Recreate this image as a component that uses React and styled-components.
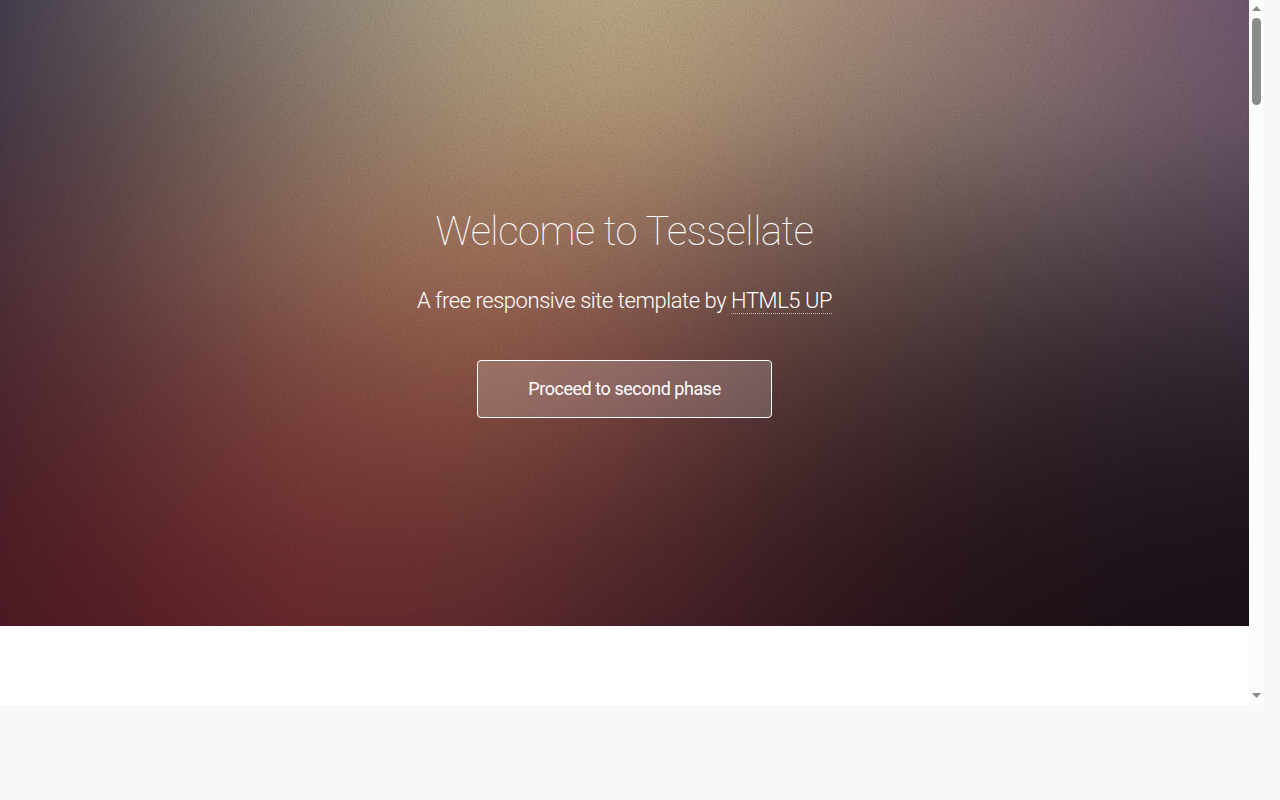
import React from "react";
import styled, { createGlobalStyle } from "styled-components";

const GlobalStyle = createGlobalStyle`
  body {
    margin: 0;
    background: #f8f8f8;
    color: #fff;
    font-family: Roboto, "Open Sans", sans-serif;
    font-size: 18px;
    letter-spacing: -0.025em;
  }
`;

const Preview = styled.div`
  display: flex;
  margin-right: 16px;
`;
const Page = styled.main`
  flex: 1;
  padding-bottom: 79px;
  background: #fff;
`;
const Hero = styled.section`
  position: relative;
  isolation: isolate;
  display: flex;
  flex-direction: column;
  align-items: center;
  padding: 208px 24px;
  text-align: center;
`;
const Backdrop = styled.svg`
  position: absolute;
  inset: 0;
  z-index: -1;
  width: 100%;
  height: 100%;
`;
const Title = styled.h1`
  margin: 0;
  font-size: 40px;
  line-height: 48px;
  font-weight: 100;
`;
const Tagline = styled.p`
  margin: 29px 0 43px;
  font-size: 22px;
  line-height: 32px;
  font-weight: 300;
`;
const TextLink = styled.a`
  color: inherit;
  text-decoration: none;
  border-bottom: 1px dotted rgba(255, 255, 255, 0.6);
`;
const Button = styled.button`
  padding: 16px 50px;
  border: 1px solid #fff;
  border-radius: 4px;
  background: rgba(255, 255, 255, 0.18);
  color: #fff;
  font: inherit;
  line-height: 24px;
  letter-spacing: inherit;
  cursor: pointer;
`;
const Scrollbar = styled.div`
  display: flex;
  flex-direction: column;
  align-items: center;
  width: 15px;
  background: #fcfcfc;
`;
const Thumb = styled.div`
  width: 9px;
  height: 87px;
  margin-bottom: auto;
  border-radius: 5px;
  background: #8b8b8b;
`;
const ArrowButton = styled.button`
  display: flex;
  align-items: flex-start;
  justify-content: center;
  width: 15px;
  height: 18px;
  padding: 6px 0 0;
  border: 0;
  background: none;
`;

// colours of the backdrop, evenly spaced over its width and height
const mesh = [
  ["#423b4d", "#6c6364", "#8f8579", "#ada085", "#bbaa86", "#af987f", "#9e8379", "#896c71", "#6d5671"],
  ["#433646", "#665451", "#8a7567", "#a58d73", "#b09373", "#9b8170", "#85716a", "#76636a", "#665264"],
  ["#4b2f39", "#6c4c49", "#8d6656", "#9f7158", "#926b59", "#76584f", "#5f4d4a", "#55454c", "#4a3b4a"],
  ["#4b2730", "#67393a", "#7f4a41", "#8b5445", "#784641", "#573837", "#433133", "#35272f", "#302531"],
  ["#4c1e28", "#642c2e", "#763735", "#713b36", "#5f3231", "#422528", "#2f1c20", "#251820", "#20161f"],
  ["#4c1a24", "#591f27", "#67292d", "#5f292d", "#4a2229", "#361920", "#251419", "#1e1118", "#1b1018"],
];

function MeshRows() {
  return mesh.map((row, i) => (
    <rect
      key={i}
      width="800"
      height="500"
      fill={`url(#row${i})`}
      mask={i ? `url(#mask${i})` : undefined}
    />
  ));
}

function HeroBackdrop() {
  return (
    <Backdrop viewBox="0 0 800 500" preserveAspectRatio="none" aria-hidden="true">
      <defs>
        {mesh.map((row, i) => (
          <React.Fragment key={i}>
            <linearGradient id={`row${i}`}>
              {row.map((color, j) => (
                <stop key={j} offset={j / (row.length - 1)} stopColor={color} />
              ))}
            </linearGradient>
            <linearGradient
              id={`fade${i}`}
              gradientUnits="userSpaceOnUse"
              x1="0"
              y1={(i - 1) * 100}
              x2="0"
              y2={i * 100}
            >
              <stop offset="0" stopColor="#fff" stopOpacity="0" />
              <stop offset="1" stopColor="#fff" />
            </linearGradient>
            <mask id={`mask${i}`} maskUnits="userSpaceOnUse" x="0" y="0" width="800" height="500">
              <rect width="800" height="500" fill={`url(#fade${i})`} />
            </mask>
          </React.Fragment>
        ))}
        <filter id="soften" x="0" y="0" width="100%" height="100%" colorInterpolationFilters="sRGB">
          <feGaussianBlur stdDeviation="30" />
        </filter>
        <filter id="grain" x="0" y="0" width="100%" height="100%">
          <feTurbulence type="fractalNoise" baseFrequency="0.8" numOctaves="2" seed="4" />
          <feColorMatrix values="0 0 0 0 0  0 0 0 0 0  0 0 0 0 0  0.9 0 0 0 -0.38" />
        </filter>
      </defs>
      <MeshRows />
      <g filter="url(#soften)">
        <MeshRows />
      </g>
      <rect width="800" height="500" filter="url(#grain)" opacity="0.25" />
    </Backdrop>
  );
}

function Arrow({ down }) {
  return (
    <svg width="9" height="5" viewBox="0 0 9 5" fill="#8b8b8b" aria-hidden="true">
      <path d={down ? "M0 0h9L4.5 5z" : "M0 5h9L4.5 0z"} />
    </svg>
  );
}

export default function App() {
  return (
    <>
      <GlobalStyle />
      <Preview>
        <Page>
          <Hero>
            <HeroBackdrop />
            <Title>Welcome to Tessellate</Title>
            <Tagline>
              A free responsive site template by <TextLink href="#html5up">HTML5 UP</TextLink>
            </Tagline>
            <Button type="button">Proceed to second phase</Button>
          </Hero>
        </Page>
        <Scrollbar>
          <ArrowButton type="button" aria-label="Scroll up">
            <Arrow />
          </ArrowButton>
          <Thumb />
          <ArrowButton type="button" aria-label="Scroll down">
            <Arrow down />
          </ArrowButton>
        </Scrollbar>
      </Preview>
    </>
  );
}
